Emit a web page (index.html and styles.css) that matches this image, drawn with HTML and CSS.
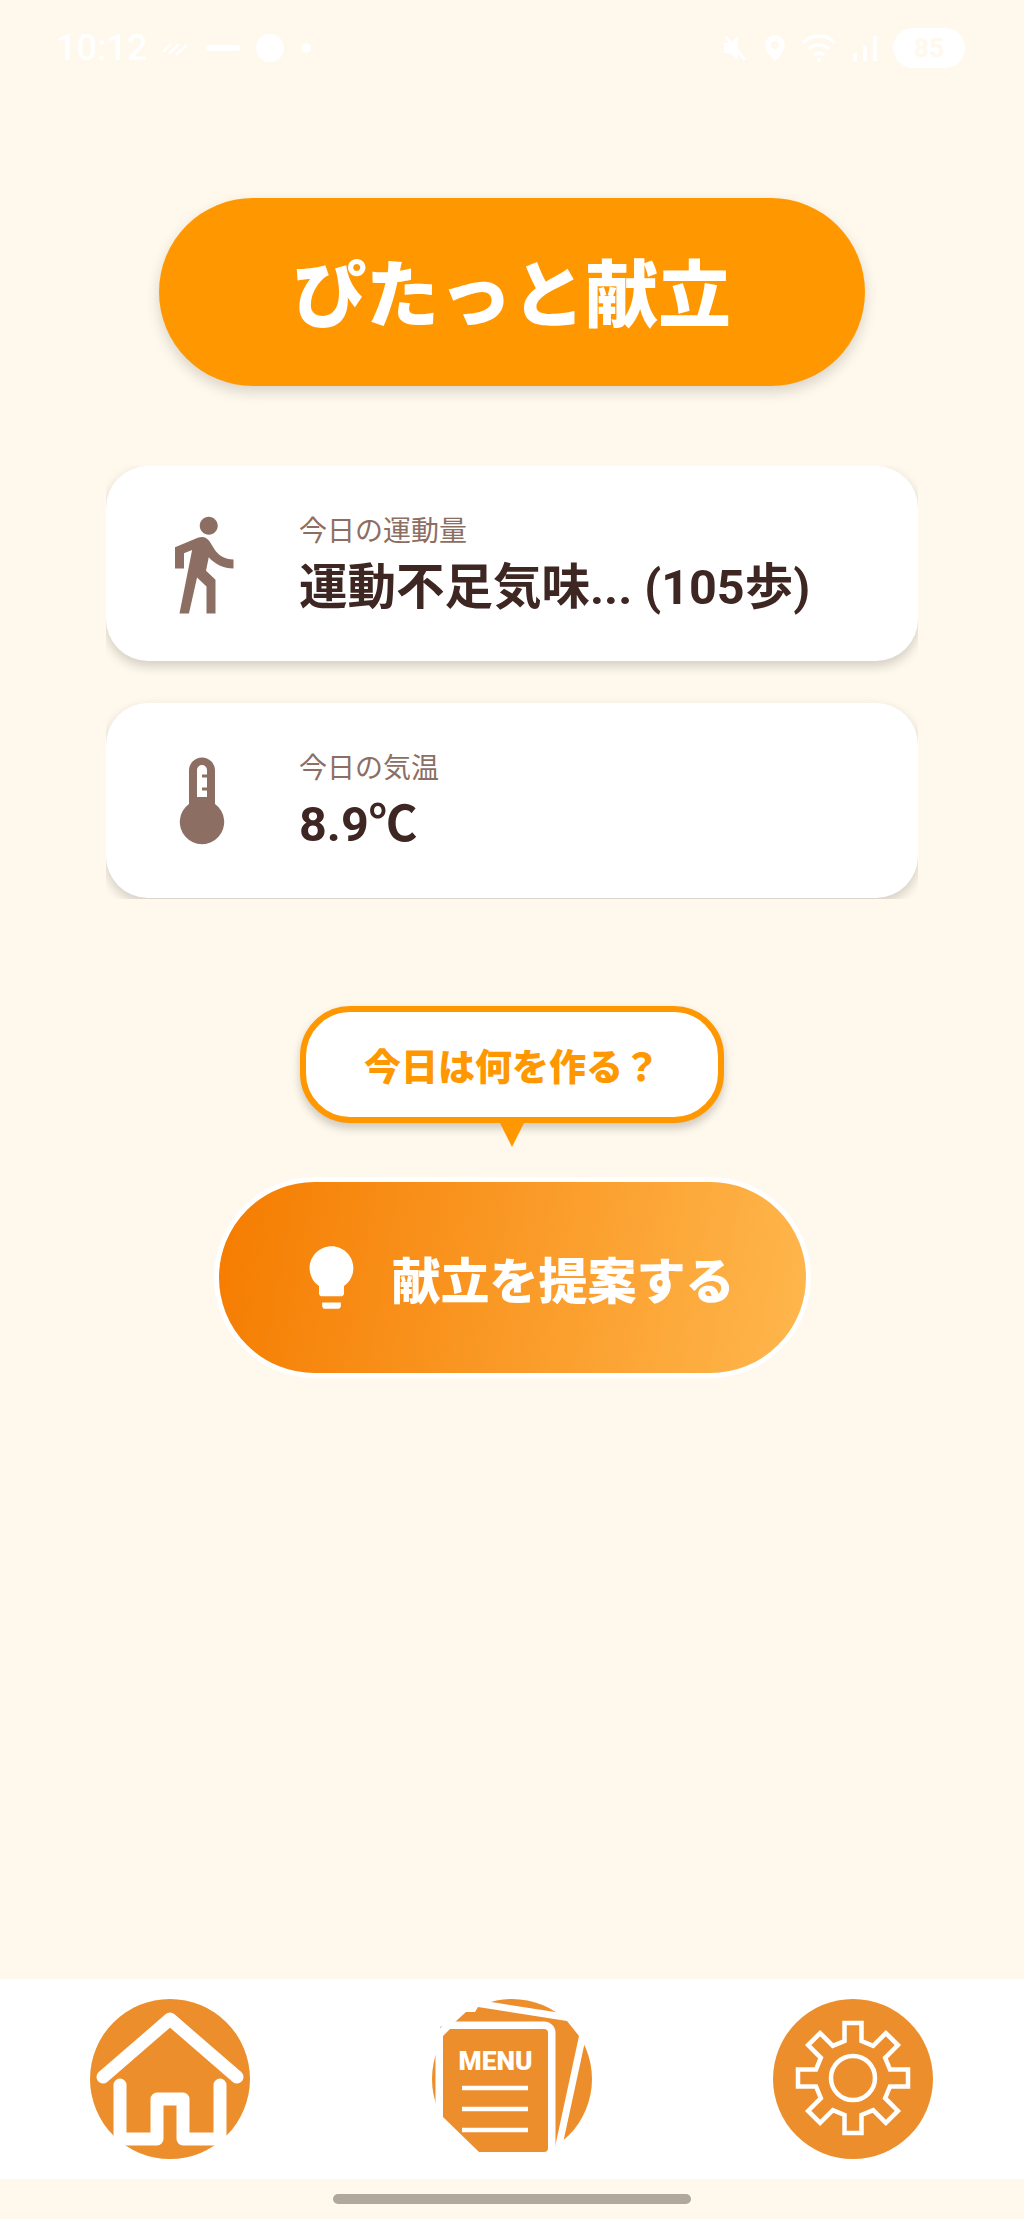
FILE: index.html
```html
<!DOCTYPE html>
<html lang="ja">
<head>
    <meta charset="UTF-8">
    <meta name="viewport" content="width=device-width, initial-scale=1.0">
    <title>ぴたっと献立</title>
    <link rel="stylesheet" href="styles.css">
</head>
<body>
    <div class="statusbar">
        <div class="status-left">
            <span class="time">10:12</span>
            <svg class="st-icon" width="30" height="20" viewBox="0 0 30 20"><path d="M2 14l8-8M8 16l10-10M15 17l11-10" fill="none" stroke="#fff" stroke-width="2.5"/></svg>
            <svg class="st-icon" width="36" height="20" viewBox="0 0 36 20"><rect x="1" y="7" width="34" height="6" rx="2" fill="#fff"/></svg>
            <svg class="st-icon" width="30" height="30" viewBox="0 0 30 30"><circle cx="15" cy="15" r="14" fill="#fff"/></svg>
            <svg class="st-icon dot" width="14" height="20" viewBox="0 0 14 20"><circle cx="7" cy="10" r="5" fill="#fff"/></svg>
        </div>
        <div class="status-right">
            <svg width="28" height="30" viewBox="0 0 28 30"><path d="M3 10h6l8-7v24l-8-7H3z" fill="#fff"/><path d="M4 3l20 24" stroke="#fff" stroke-width="3"/></svg>
            <svg width="24" height="30" viewBox="0 0 24 30"><path d="M12 2a10 10 0 0 0-10 10c0 7 10 16 10 16s10-9 10-16A10 10 0 0 0 12 2zm0 14a4 4 0 1 1 0-8 4 4 0 0 1 0 8z" fill="#fff"/></svg>
            <svg width="36" height="32" viewBox="0 0 36 32" fill="none" stroke="#fff" stroke-width="3.5"><path d="M2 11a22 22 0 0 1 32 0M8 17a14 14 0 0 1 20 0M13 23a7 7 0 0 1 10 0"/><path d="M18 26v4"/></svg>
            <svg width="28" height="30" viewBox="0 0 28 30"><path d="M2 20h4v8H2zM12 13h4v15h-4zM22 3h4v25h-4z" fill="#fff"/></svg>
            <div class="battery">85</div>
        </div>
    </div>

    <main class="page">
        <h1 class="title">ぴたっと献立</h1>

        <div class="cards">
            <div class="card">
                <svg class="card-icon" viewBox="0 0 24 24"><path d="M13.5 5.5c1.1 0 2-.9 2-2s-.9-2-2-2-2 .9-2 2 .9 2 2 2zM9.8 8.9L7 23h2.1l1.8-8 2.1 2v6h2v-7.5l-2.1-2 .6-3C14.8 12 16.8 13 19 13v-2c-1.9 0-3.5-1-4.3-2.4l-1-1.6c-.4-.6-1-1-1.7-1-.3 0-.5.1-.8.1L6 8.3V13h2V9.6l1.8-.7"/></svg>
                <div class="card-text">
                    <div class="card-label">今日の運動量</div>
                    <div class="card-value">運動不足気味... (105歩)</div>
                </div>
            </div>
            <div class="card">
                <svg class="card-icon" viewBox="0 0 108 108"><path fill-rule="evenodd" d="M41 23.5a13 13 0 0 1 26 0V57a22.2 22.2 0 1 1-26 0zM49 50V23a5 5 0 0 1 10 0v4.5h-5v3h5v10h-5v3h5V50z"/></svg>
                <div class="card-text">
                    <div class="card-label">今日の気温</div>
                    <div class="card-value">8.9℃</div>
                </div>
            </div>
        </div>

        <div class="bubble">今日は何を作る？</div>

        <button class="suggest">
            <svg class="bulb" viewBox="0 0 24 24"><path d="M9 21c0 .55.45 1 1 1h4c.55 0 1-.45 1-1v-1H9v1zm3-19C8.14 2 5 5.14 5 9c0 2.38 1.19 4.47 3 5.74V17c0 .55.45 1 1 1h6c.55 0 1-.45 1-1v-2.26c1.81-1.27 3-3.36 3-5.74 0-3.86-3.14-7-7-7z"/></svg>
            <span>献立を提案する</span>
        </button>
    </main>

    <nav class="bottom-nav">
        <svg class="nav-icon" viewBox="0 0 160 160">
            <circle cx="80" cy="80" r="80" fill="#ed8e2c"/>
            <g fill="none" stroke="#fff" stroke-width="13" stroke-linecap="round" stroke-linejoin="round">
                <path d="M13 78L80 20l67 58"/>
                <path d="M30 86v54h37v-40h26v40h37V86"/>
            </g>
        </svg>
        <svg class="nav-icon" viewBox="0 0 160 160">
            <circle cx="80" cy="80" r="80" fill="#ed8e2c"/>
            <path class="page-sheet" d="M46 8l89 14 12 15-24 111-55 3L8 28l15-5 11-10h9z" stroke-width="14"/>
            <path class="page-sheet" d="M11 37l7-7h94a4 4 0 0 1 4 4v115a4 4 0 0 1-4 4H47L11 118z" stroke-width="15"/>
            <text class="menu-word" x="63.5" y="71" text-anchor="middle" textLength="74" lengthAdjust="spacingAndGlyphs">MENU</text>
            <path d="M30 89h66M30 110h66M30 131h66" stroke="#fff" stroke-width="4.5"/>
        </svg>
        <svg class="nav-icon" viewBox="0 0 160 160">
            <circle cx="80" cy="80" r="80" fill="#ed8e2c"/>
            <g transform="translate(80 79)" fill="none" stroke="#fff" stroke-width="4.5">
                <polygon points="-8.5,-37 -8.5,-55 8.5,-55 8.5,-37 20.15,-32.17 32.88,-44.9 44.9,-32.88 32.17,-20.15 37,-8.5 55,-8.5 55,8.5 37,8.5 32.17,20.15 44.9,32.88 32.88,44.9 20.15,32.17 8.5,37 8.5,55 -8.5,55 -8.5,37 -20.15,32.17 -32.88,44.9 -44.9,32.88 -32.17,20.15 -37,8.5 -55,8.5 -55,-8.5 -37,-8.5 -32.17,-20.15 -44.9,-32.88 -32.88,-44.9 -20.15,-32.17"/>
                <circle r="22"/>
            </g>
        </svg>
    </nav>
    <div class="gesture-area"><div class="home-bar"></div></div>
</body>
</html>
```

FILE: styles.css
```css
html, body {
    margin: 0;
    padding: 0;
}

body {
    width: 1024px;
    height: 2219px;
    overflow: hidden;
    display: flex;
    flex-direction: column;
    background: #fff8ec;
    font-family: Roboto, "Noto Sans CJK JP", sans-serif;
    color: #3e2723;
}

/* status bar, white on cream like the original */
.statusbar {
    height: 100px;
    padding: 28px 59px 0 56px;
    box-sizing: border-box;
    display: flex;
    justify-content: space-between;
    align-items: flex-start;
    color: #fff;
}

.status-left,
.status-right {
    display: flex;
    align-items: center;
    height: 40px;
}

.status-left {
    gap: 14px;
}

.status-right {
    gap: 14px;
}

.time {
    font-size: 36px;
    font-weight: 500;
}

.battery {
    width: 72px;
    height: 40px;
    border-radius: 20px;
    background: #fff;
    color: #fff8ec;
    font-size: 26px;
    font-weight: 700;
    line-height: 40px;
    text-align: center;
}

.page {
    flex: 1;
    display: flex;
    flex-direction: column;
    align-items: center;
}

.title {
    width: 706px;
    height: 188px;
    margin: 98px 0 80px;
    border-radius: 94px;
    background: #ff9800;
    color: #fff;
    font-size: 73px;
    font-weight: 900;
    line-height: 196px;
    text-align: center;
    box-shadow: 0 6px 14px rgba(0, 0, 0, 0.15);
}

.cards {
    width: 812px;
    height: 433px;
    overflow: hidden;
    display: flex;
    flex-direction: column;
    gap: 42px;
}

.card {
    flex: none;
    height: 195px;
    padding-left: 42px;
    box-sizing: border-box;
    display: flex;
    align-items: center;
    gap: 43px;
    background: #fff;
    border-radius: 42px;
    box-shadow: 0 5px 12px rgba(0, 0, 0, 0.18);
}

.card-icon {
    width: 108px;
    height: 108px;
    fill: #8d6e63;
    flex: none;
}

.card-text {
    padding-top: 8px;
}

.card-label {
    font-size: 28px;
    line-height: 40px;
    color: #8d6e63;
}

.card-value {
    font-size: 48.5px;
    font-weight: 700;
    line-height: 71px;
}

.bubble {
    position: relative;
    width: 424px;
    height: 117px;
    margin-top: 107px;
    box-sizing: border-box;
    border: 6px solid #ff9800;
    border-radius: 50px;
    background: #fff;
    color: #ff9800;
    font-size: 37px;
    font-weight: 900;
    line-height: 113px;
    text-align: center;
    box-shadow: 0 5px 10px rgba(0, 0, 0, 0.2);
}

.bubble::after {
    content: "";
    position: absolute;
    left: 50%;
    top: 111px;
    margin-left: -12px;
    border-left: 12px solid transparent;
    border-right: 12px solid transparent;
    border-top: 24px solid #ff9800;
}

.suggest {
    width: 597px;
    height: 201px;
    margin-top: 54px;
    padding: 0 0 0 75px;
    box-sizing: border-box;
    display: flex;
    align-items: center;
    gap: 23px;
    border: 5px solid #fff;
    border-radius: 101px;
    background: linear-gradient(100deg, #f57c00, #ffb74d);
    color: #fff;
    font-family: inherit;
    font-size: 49px;
    font-weight: 900;
}

.bulb {
    width: 75px;
    height: 75px;
    fill: #fff;
    flex: none;
}

.bottom-nav {
    height: 200px;
    padding: 0 91px 0 90px;
    box-sizing: border-box;
    display: flex;
    justify-content: space-between;
    align-items: center;
    background: #fff;
}

.nav-icon {
    width: 160px;
    height: 160px;
}

.page-sheet {
    fill: #ed8e2c;
    stroke: #fff;
    stroke-linejoin: round;
    paint-order: stroke;
}

.menu-word {
    fill: #fff;
    font-family: Roboto, sans-serif;
    font-size: 26px;
    font-weight: 900;
}

.gesture-area {
    height: 40px;
    display: flex;
    justify-content: center;
    padding-top: 15px;
    box-sizing: border-box;
}

.home-bar {
    width: 358px;
    height: 10px;
    border-radius: 5px;
    background: #b0a89f;
}
```
